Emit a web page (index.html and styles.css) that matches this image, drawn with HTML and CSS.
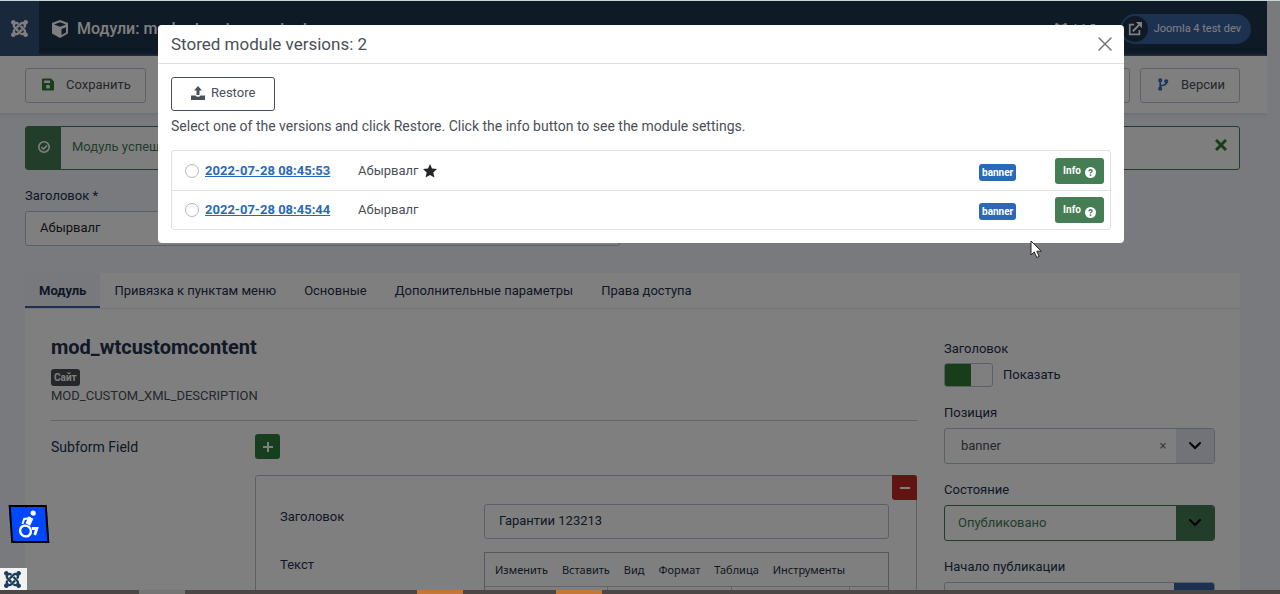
FILE: index.html
```html
<!DOCTYPE html>
<html lang="ru">
<head>
    <meta charset="UTF-8">
    <meta name="viewport" content="width=device-width, initial-scale=1.0">
    <title>Модули: mod_wtcustomcontent</title>
    <link rel="stylesheet" href="styles.css">
</head>
<body>
    <svg class="sprite" aria-hidden="true">
        <symbol id="joomla" viewBox="0 32 448 448">
            <path fill="currentColor" d="M.6 92.1C.6 58.8 27.4 32 60.4 32c30 0 54.5 21.9 59.2 50.2 32.600-7.600 67.100.6 96.500 30l-44.300 44.300c-20.500-20.500-42.600-16.300-55.400-3.500-14.300 14.300-14.300 37.900 0 52.200l99.500 99.500-44 44.300c-87.700-87.200-49.700-49.700-99.800-99.700-26.800-26.500-35-64.800-24.800-98.900C20.4 144.6.6 120.7.6 92.1zm129.500 116.400l44.300 44.300c10-10 89.700-89.700 99.700-99.800 14.300-14.300 37.600-14.300 51.900 0 12.800 12.800 17 35-3.500 55.400l44 44.300c31.200-31.200 38.500-67.600 28.900-101.200 29.200-4.100 51.900-29.200 51.900-59.500 0-33.200-26.800-60.100-59.800-60.100-30.300 0-55.400 22.500-59.500 51.600-33.800-9.900-71.700-1.500-98.300 25.100-18.300 19.100-71.100 71.500-99.600 99.900zm266.300 152.200c8.200-32.700-.9-68.500-26.300-93.900-11.800-12.200 5 4.700-99.500-99.700l-44.300 44.300 99.700 99.700c14.300 14.300 14.300 37.600 0 51.900-12.800 12.800-35 17-55.400-3.500l-44 44.300c27.600 30.200 68 38.800 102.700 28 5.500 27.400 29.700 48.100 58.900 48.100 33 0 59.800-26.800 59.800-60.100 0-30.200-22.500-55-51.600-59.100zm-84.300-53.100l-44-44.300c-87 86.400-50.400 50.400-99.700 99.800-14.300 14.300-37.600 14.300-51.900 0-13.100-13.400-16.900-35.300 3.200-55.400l-44-44.300c-30.200 30.200-38 65.200-29.500 98.300-26.700 6-46.200 29.900-46.200 58.200C0 453.200 26.800 480 59.800 480c28.600 0 52.500-19.800 58.600-46.700 32.700 8.200 68.500-.6 94.200-26 32.100-32 12.200-12.400 99.500-99.700z"/>
        </symbol>
        <symbol id="chevron" viewBox="0 0 14 10">
            <path d="M2 2l5 5 5-5" fill="none" stroke="currentColor" stroke-width="2" stroke-linecap="round"/>
        </symbol>
        <symbol id="question" viewBox="0 0 12 12">
            <circle cx="6" cy="6" r="6" fill="#fff"/>
            <path d="M4.200 4.700Q4.400 3 6.100 3 7.800 3.100 7.800 4.600 7.700 5.500 6 6.300V7" fill="none" stroke="#457d54" stroke-width="1.400"/>
            <circle cx="6" cy="8.800" r="1" fill="#457d54"/>
        </symbol>
    </svg>

    <div class="screen">
        <div class="page">
            <header class="header">
                <a class="header-logo" href="#" aria-label="Joomla"><svg><use href="#joomla"/></svg></a>
                <h1 class="header-title">
                    <svg viewBox="0 0 18 18">
                        <path d="M9 0l8 3v10.500L9 18l-8-4.500V3z" fill="currentColor"/>
                        <path d="M3 4.500l6 2.300 6-2.300L9 2.300zM10.500 9v6l4.500-2.600V7.200z" fill="#1f344e"/>
                    </svg>
                    Модули: mod_wtcustomcontent
                </h1>
                <span class="header-version"><svg><use href="#joomla"/></svg>4.1.5</span>
                <a class="header-site" href="#">
                    <span class="header-site-icon">
                        <svg viewBox="0 0 16 16" fill="none" stroke="currentColor" stroke-width="2">
                            <path d="M7 3H2v11h11V9"/>
                            <path d="M5.500 10.500L13 3" stroke-width="2.400"/>
                            <path d="M9 0h7v7z" fill="currentColor" stroke="none"/>
                        </svg>
                    </span>
                    Joomla 4 test dev
                </a>
            </header>

            <div class="toolbar">
                <button type="button" class="tool">
                    <svg class="green" viewBox="0 0 12 12"><path fill-rule="evenodd" fill="currentColor" d="M1 0h8l3 3v8q0 1-1 1H1q-1 0-1-1V1q0-1 1-1zM2 2v2.500h6V2zM6 6.200a2 2 0 100 4 2 2 0 000-4z"/></svg>
                    Сохранить
                </button>
                <button type="button" class="tool tool-right">Просмотр</button>
                <button type="button" class="tool">
                    <svg class="blue" viewBox="0 0 12 14" fill="none" stroke="currentColor" stroke-width="1.800">
                        <path d="M3 3v8M10 4.500Q10 7.500 3 8.500"/>
                        <circle cx="3" cy="2.500" r="1.300"/><circle cx="3" cy="11.500" r="1.300"/><circle cx="9.500" cy="3.500" r="1.300"/>
                    </svg>
                    Версии
                </button>
            </div>

            <main class="content">
                <div class="alert">
                    <span class="alert-icon">
                        <svg viewBox="0 0 14 14" fill="none" stroke="currentColor" stroke-width="1.600"><circle cx="7" cy="7" r="5.200"/><path d="M4.500 7l2 2 3.500-3.500"/></svg>
                    </span>
                    <span class="alert-text">Модуль успешно сохранён.</span>
                    <button type="button" class="alert-close" aria-label="Закрыть">
                        <svg viewBox="0 0 12 12"><path d="M1 1l10 10M11 1L1 11" stroke="currentColor" stroke-width="3"/></svg>
                    </button>
                </div>

                <label class="label" for="title">Заголовок *</label>
                <input class="input title-input" id="title" type="text" value="Абырвалг">

                <div class="card">
                    <nav class="tabs">
                        <a class="tab active" href="#">Модуль</a>
                        <a class="tab" href="#">Привязка к пунктам меню</a>
                        <a class="tab" href="#">Основные</a>
                        <a class="tab" href="#">Дополнительные параметры</a>
                        <a class="tab" href="#">Права доступа</a>
                    </nav>
                    <div class="card-body">
                        <section class="main-col">
                            <h2>mod_wtcustomcontent</h2>
                            <span class="badge badge-dark">Сайт</span>
                            <p class="description">MOD_CUSTOM_XML_DESCRIPTION</p>
                            <div class="field-row">
                                <span class="field-name">Subform Field</span>
                                <div class="subform">
                                    <button type="button" class="square add" aria-label="Добавить">
                                        <svg viewBox="0 0 12 12"><path d="M6 1v10M1 6h10" stroke="currentColor" stroke-width="2"/></svg>
                                    </button>
                                    <div class="subform-item">
                                        <button type="button" class="square remove" aria-label="Удалить">
                                            <svg viewBox="0 0 12 12"><path d="M1 6h10" stroke="currentColor" stroke-width="2"/></svg>
                                        </button>
                                        <div class="subform-row">
                                            <label for="item-title">Заголовок</label>
                                            <input class="input" id="item-title" type="text" value="Гарантии 123213">
                                        </div>
                                        <div class="subform-row">
                                            <span>Текст</span>
                                            <div class="editor">
                                                <div class="editor-menu">
                                                    <button type="button">Изменить</button>
                                                    <button type="button">Вставить</button>
                                                    <button type="button">Вид</button>
                                                    <button type="button">Формат</button>
                                                    <button type="button">Таблица</button>
                                                    <button type="button">Инструменты</button>
                                                </div>
                                                <div class="editor-tools"><span></span><span></span><span></span><span></span></div>
                                            </div>
                                        </div>
                                    </div>
                                </div>
                            </div>
                        </section>

                        <aside class="side-col">
                            <label class="label" for="show-title">Заголовок</label>
                            <div class="switch-row">
                                <input class="switch" id="show-title" type="checkbox" checked>
                                <span>Показать</span>
                            </div>
                            <label class="label" for="position">Позиция</label>
                            <div class="select-box position">
                                <select id="position"><option>banner</option></select>
                                <button type="button" class="clear" aria-label="Очистить">×</button>
                                <span class="arrow"><svg><use href="#chevron"/></svg></span>
                            </div>
                            <label class="label" for="state">Состояние</label>
                            <div class="select-box state">
                                <select id="state"><option>Опубликовано</option></select>
                                <span class="arrow"><svg><use href="#chevron"/></svg></span>
                            </div>
                            <label class="label" for="publish">Начало публикации</label>
                            <div class="select-box date">
                                <input id="publish" type="text">
                                <button type="button" class="arrow" aria-label="Календарь"></button>
                            </div>
                        </aside>
                    </div>
                </div>
            </main>
        </div>

        <div class="backdrop">
            <div class="modal" role="dialog" aria-labelledby="modal-title">
                <div class="modal-header">
                    <h3 id="modal-title">Stored module versions: 2</h3>
                    <button type="button" class="modal-close" aria-label="Close">
                        <svg viewBox="0 0 14 14"><path d="M1 1l12 12M13 1L1 13" stroke="currentColor" stroke-width="1.500" stroke-linecap="round"/></svg>
                    </button>
                </div>
                <div class="modal-body">
                    <button type="button" class="restore">
                        <svg viewBox="0 0 14 14" fill="currentColor"><path d="M7 0l4 4.500H8.500V9h-3V4.500H3zM0 9.500h4.500q.5 1.300 2.500 1.300t2.500-1.300H14V14H0z"/></svg>
                        Restore
                    </button>
                    <p>Select one of the versions and click Restore. Click the info button to see the module settings.</p>
                    <ul class="versions">
                        <li>
                            <input type="radio" name="version" id="v1" aria-label="2022-07-28 08:45:53">
                            <a href="#">2022-07-28 08:45:53</a>
                            <span class="version-name">Абырвалг
                                <svg viewBox="0 0 14 14"><path d="M7 0l2 4.600 5 .5-3.700 3.300L11.400 13.500 7 10.900 2.600 13.500l1.100-5.100L0 5.100l5-.5z" fill="currentColor"/></svg>
                            </span>
                            <span class="badge badge-blue">banner</span>
                            <button type="button" class="info">Info <svg><use href="#question"/></svg></button>
                        </li>
                        <li>
                            <input type="radio" name="version" id="v2" aria-label="2022-07-28 08:45:44">
                            <a href="#">2022-07-28 08:45:44</a>
                            <span class="version-name">Абырвалг</span>
                            <span class="badge badge-blue">banner</span>
                            <button type="button" class="info">Info <svg><use href="#question"/></svg></button>
                        </li>
                    </ul>
                </div>
            </div>
        </div>

        <button type="button" class="accessibility" aria-label="Accessibility">
            <svg viewBox="0 0 22 28" fill="none" stroke="#fff">
                <circle cx="16" cy="3" r="2.600" fill="#fff" stroke="none"/>
                <path d="M4.500 14L6.500 9l7-1" stroke-width="2"/>
                <path d="M13.500 7.500L9.800 14.500" stroke-width="5"/>
                <circle cx="7" cy="21" r="5.400" stroke-width="2.400"/>
                <path d="M13.500 18.500h5L16 25" stroke-width="2.800"/>
            </svg>
        </button>
        <div class="status"><svg><use href="#joomla"/></svg></div>
        <svg class="cursor" viewBox="0 0 12 19"><path d="M1 1v14l3.300-3 2.400 5.500 2.500-1.100-2.400-5.200h4.500z" fill="#fff" stroke="#222" stroke-width="1"/></svg>
    </div>
    <div class="taskbar"><span class="grey"></span><span class="orange"></span><span class="orange"></span></div>
</body>
</html>
```

FILE: styles.css
```css
* {
    box-sizing: border-box;
}
body {
    margin: 0;
    height: 100vh;
    display: flex;
    flex-direction: column;
    overflow: hidden;
    font-family: Roboto, "Noto Sans", sans-serif;
    font-size: 13px;
    line-height: 20px;
    color: #22262a;
    background-color: #f0f4fb;
}
h1, h2, h3, p, ul {
    margin: 0;
    padding: 0;
}
button, input, select {
    font: inherit;
    color: inherit;
}
button {
    padding: 0;
    border: none;
    background: none;
    cursor: pointer;
}
a {
    color: inherit;
    text-decoration: none;
}
svg {
    flex: none;
}
.sprite {
    position: absolute;
    width: 0;
    height: 0;
}
.screen {
    position: relative;
    flex: 1;
    min-height: 0;
    overflow: hidden;
    border-top: 1px solid #c6d6d6;
}
.page {
    height: 100%;
    margin-right: 13px;
    overflow: hidden;
}

/* Header */
.header {
    display: flex;
    align-items: center;
    height: 55px;
    padding-right: 16px;
    color: #fff;
    background-color: #1f344e;
}
.header-logo {
    display: flex;
    align-items: center;
    justify-content: center;
    width: 39px;
    height: 100%;
    background-color: #345078;
}
.header-logo svg {
    width: 17px;
    height: 17px;
}
.header-title {
    display: flex;
    align-items: center;
    gap: 8px;
    margin-left: 12px;
    font-size: 16px;
    font-weight: 500;
}
.header-title svg {
    width: 18px;
    height: 18px;
}
.header-version {
    display: flex;
    align-items: center;
    gap: 4px;
    margin-left: auto;
    margin-right: 24px;
    font-size: 11px;
}
.header-version svg {
    width: 12px;
    height: 12px;
}
.header-site {
    display: flex;
    align-items: center;
    gap: 6px;
    height: 30px;
    padding: 0 10px 0 2px;
    border-radius: 15px;
    font-size: 11px;
    background-color: #3b63a0;
}
.header-site-icon {
    display: flex;
    align-items: center;
    justify-content: center;
    width: 26px;
    height: 26px;
    border-radius: 50%;
    background-color: #1f344e;
}
.header-site-icon svg {
    width: 14px;
    height: 14px;
}

/* Toolbar */
.toolbar {
    display: flex;
    gap: 10px;
    height: 57px;
    padding: 12px 27px 10px 25px;
    background-color: #fff;
    box-shadow: 0 1px 4px #cfd8e4;
}
.tool {
    display: flex;
    align-items: center;
    gap: 12px;
    padding: 0 14px 2px 16px;
    border: 1px solid #b9c2cf;
    border-radius: 3px;
    color: #495057;
}
.tool svg {
    width: 12px;
    height: 13px;
}
.tool-right {
    margin-left: auto;
}
.green {
    color: #2f7d32;
}
.blue {
    color: #2a69b8;
}

/* Content */
.content {
    padding: 13px 27px 0 25px;
}
.alert {
    display: flex;
    align-items: center;
    height: 44px;
    margin-bottom: 16px;
    border: 1px solid #457d54;
    border-radius: 3px;
    color: #457d54;
    background-color: #fcfdfe;
}
.alert-icon {
    display: flex;
    align-items: center;
    justify-content: center;
    align-self: stretch;
    width: 35px;
    padding-bottom: 3px;
    color: #fff;
    background-color: #457d54;
}
.alert-icon svg {
    width: 14px;
    height: 14px;
}
.alert-text {
    margin-left: 11px;
    padding-bottom: 3px;
}
.alert-close {
    margin-left: auto;
    padding: 0 12px 6px;
}
.alert-close svg {
    display: block;
    width: 12px;
    height: 12px;
    color: #2f7d32;
}
.label {
    display: block;
    color: #22314d;
}
.input {
    display: block;
    width: 100%;
    height: 35px;
    padding: 0 14px 2px;
    border: 1px solid #b6bfd4;
    border-radius: 3px;
    background-color: #fff;
}
.title-input {
    width: 49%;
    margin-top: 5px;
}

/* Card */
.card {
    margin-top: 27px;
    background-color: #fff;
}
.tabs {
    display: flex;
    height: 36px;
    border-bottom: 1px solid #e2e6ee;
}
.tab {
    padding: 8px 14px 0;
    color: #22314d;
}
.tab.active {
    font-weight: 700;
    border-bottom: 2px solid #3b63a0;
    background-color: #eef3fa;
}
.card-body {
    display: flex;
    gap: 27px;
    padding: 25px 25px 0 26px;
}
.main-col {
    flex: 1;
    min-width: 0;
}
.main-col h2 {
    margin-bottom: 9px;
    font-size: 20px;
    line-height: 26px;
    font-weight: 700;
    color: #22314d;
}
.badge {
    display: block;
    width: fit-content;
    padding: 0 3px;
    border-radius: 3px;
    font-size: 10px;
    line-height: 17px;
    font-weight: 700;
    color: #fff;
}
.badge-dark {
    background-color: #495057;
}
.badge-blue {
    background-color: #2a69b8;
}
.description {
    padding-bottom: 14px;
    border-bottom: 1px solid #c8cdd6;
    color: #495057;
}
.field-row {
    display: grid;
    grid-template-columns: 204px 1fr;
    padding-top: 13px;
    color: #22314d;
}
.field-name {
    padding-top: 3px;
    font-size: 14px;
}
.square {
    display: flex;
    align-items: center;
    justify-content: center;
    width: 25px;
    height: 25px;
    border-radius: 3px;
    color: #fff;
}
.square svg {
    width: 12px;
    height: 12px;
}
.add {
    background-color: #2f7d3e;
}
.remove {
    position: absolute;
    top: -1px;
    right: -1px;
    border-radius: 0 3px 0 3px;
    background-color: #c52827;
}
.subform-item {
    position: relative;
    margin-top: 16px;
    padding: 28px 27px 0 24px;
    border: 1px solid #b6bfd4;
    border-radius: 3px;
}
.subform-row {
    display: grid;
    grid-template-columns: 204px 1fr;
    margin-bottom: 13px;
}
.subform-row > :first-child {
    padding-top: 3px;
}
.editor {
    border: 1px solid #b0b0b8;
    font-family: "Noto Sans", sans-serif;
    font-size: 11px;
}
.editor-menu {
    display: flex;
    gap: 14px;
    height: 33px;
    padding: 0 10px;
    color: #222f3e;
}
.editor-tools {
    display: grid;
    grid-template-columns: 122px 124px 118px 1fr;
    height: 40px;
    border-top: 1px solid #c8c8cc;
}
.editor-tools span + span {
    border-left: 1px solid #c8c8cc;
}

/* Side column */
.side-col {
    width: 271px;
    padding-top: 5px;
    color: #22314d;
}
.switch-row {
    display: flex;
    align-items: center;
    gap: 10px;
    margin: 4px 0 16px;
}
.switch {
    appearance: none;
    width: 49px;
    height: 24px;
    margin: 0;
    border: 1px solid #b6bfd4;
    border-radius: 3px;
    background: linear-gradient(90deg, #2f7d32 26px, #fff 26px);
}
.select-box {
    display: flex;
    height: 36px;
    margin: 5px 0 16px;
    border: 1px solid #b6bfd4;
    border-radius: 3px;
    overflow: hidden;
}
.select-box select, .select-box input {
    appearance: none;
    flex: 1;
    min-width: 0;
    padding: 0 13px;
    border: none;
    background: none;
}
.arrow {
    display: flex;
    align-items: center;
    justify-content: center;
    width: 38px;
    color: #000;
    background-color: #e2e7f3;
}
.arrow svg {
    width: 14px;
    height: 10px;
}
.position select {
    padding-left: 16px;
    color: #495057;
}
.clear {
    width: 26px;
    color: #777;
}
.state {
    border-color: #457d54;
    color: #457d54;
}
.state .arrow {
    background-color: #457d54;
}
.date .arrow {
    width: 40px;
    background-color: #3b63a0;
}

/* Modal */
.backdrop {
    position: absolute;
    inset: 0;
    display: flex;
    justify-content: center;
    align-items: flex-start;
    padding: 24px 0 0 2px;
    background-color: rgba(0, 0, 0, 0.5);
}
.modal {
    width: 966px;
    max-width: 90%;
    border-radius: 4px;
    color: #495057;
    background-color: #fff;
}
.modal-header {
    display: flex;
    align-items: center;
    justify-content: space-between;
    height: 39px;
    padding: 0 12px 0 13px;
    border-bottom: 1px solid #dee2e6;
}
.modal-header h3 {
    font-size: 17px;
    font-weight: 400;
}
.modal-close svg {
    display: block;
    width: 14px;
    height: 14px;
    color: #777;
}
.modal-body {
    padding: 13px;
}
.restore {
    display: flex;
    align-items: center;
    gap: 6px;
    height: 34px;
    padding: 0 19px 2px;
    border: 1px solid #495057;
    border-radius: 3px;
}
.restore svg {
    width: 14px;
    height: 14px;
}
.modal-body p {
    margin: 5px 0 14px;
    font-size: 14px;
}
.versions {
    list-style: none;
    border: 1px solid #dee2e6;
    border-radius: 3px;
}
.versions li {
    display: grid;
    grid-template-columns: 20px 153px 1fr 76px 49px;
    align-items: center;
    height: 39px;
    padding: 0 6px 0 13px;
}
.versions li + li {
    border-top: 1px solid #dee2e6;
}
.versions input {
    appearance: none;
    width: 14px;
    height: 14px;
    margin: 0;
    border: 1px solid #b5b5b5;
    border-radius: 50%;
}
.versions a {
    font-weight: 700;
    color: #2a69b8;
    text-decoration: underline;
}
.versions .badge {
    margin-top: 3px;
}
.version-name {
    display: flex;
    align-items: center;
    gap: 4px;
}
.version-name svg {
    width: 14px;
    height: 14px;
    color: #22262a;
}
.info {
    display: flex;
    align-items: center;
    justify-content: center;
    gap: 4px;
    height: 26px;
    border-radius: 3px;
    font-size: 10px;
    font-weight: 700;
    color: #fff;
    background-color: #457d54;
}
.info svg {
    width: 11px;
    height: 11px;
    margin-top: 4px;
}

/* Floating items */
.accessibility {
    position: absolute;
    left: 10px;
    bottom: 47px;
    display: flex;
    align-items: center;
    justify-content: center;
    width: 38px;
    height: 38px;
    border: 2px solid #000;
    background-color: #0048ff;
    transform: skewX(4deg);
}
.accessibility svg {
    width: 22px;
    height: 28px;
}
.status {
    position: absolute;
    left: 0;
    bottom: 0;
    display: flex;
    align-items: center;
    justify-content: center;
    width: 27px;
    height: 22px;
    padding-right: 3px;
    color: #1c3d5c;
    background-color: #f2f2f2;
}
.status svg {
    width: 17px;
    height: 17px;
}
.cursor {
    position: absolute;
    left: 1030px;
    top: 239px;
    width: 12px;
    height: 19px;
}
.taskbar {
    display: flex;
    height: 4px;
    padding-left: 139px;
    background-color: #4a4746;
}
.taskbar span {
    width: 46px;
}
.taskbar .grey {
    margin-right: 232px;
    background-color: #757575;
}
.taskbar .orange {
    margin-right: 93px;
    background-color: #c47837;
}
```
